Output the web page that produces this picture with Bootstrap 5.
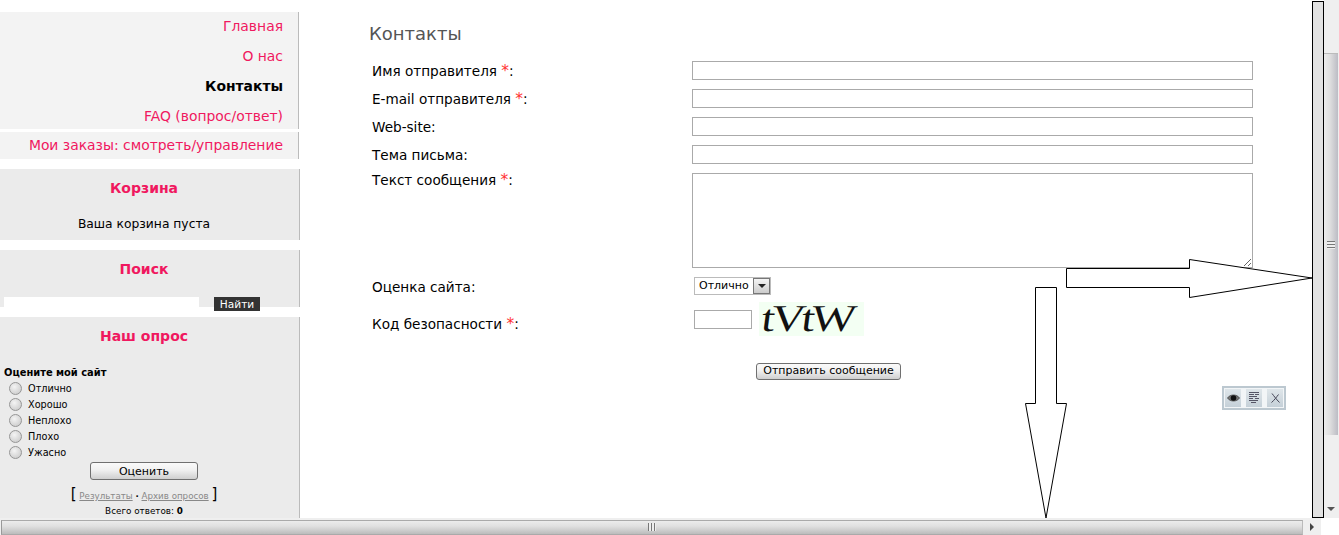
<!DOCTYPE html>
<html lang="ru">
<head>
  <meta charset="UTF-8" />
  <meta name="viewport" content="width=device-width, initial-scale=1.0"/>
  <title>Контакты</title>
  <link href="https://cdn.jsdelivr.net/npm/bootstrap@5.3.0/dist/css/bootstrap.min.css" rel="stylesheet">
  <style>
    html, body { height: 535px; overflow: hidden; background: #fff; }
    body { font-family: "DejaVu Sans", Verdana, sans-serif; font-size: 13.6px; color: #000; line-height: 1.2; }
    a { color: #f0185f; text-decoration: none; }

    .shell { position: relative; height: 535px; width: 1339px; }
    .page-row { height: 518px; }
    .side { width: 300px; padding-top: 12px; }
    .menu-box { background: #f3f3f3; border-right: 1px solid #bbb; width: 299px; padding-right: 15px; text-align: right; font-size: 13.9px; }
    .menu-box a, .menu-box b { display: block; height: 30px; line-height: 29px; }
    .menu-box b { color: #000; }
    .menu-one { height: 117px; margin-bottom: 3px; }
    .menu-two { height: 27px; margin-bottom: 10px; }
    .menu-two a { height: 27px; line-height: 27px; }
    .side-box { background: #ebebeb; border-right: 1px solid #bbb; text-align: center; padding-right: 11px; }
    .side-title { color: #f0185f; font-weight: 700; font-size: 14px; line-height: 18px; }
    .box-cart { height: 71px; padding-top: 10px; margin-bottom: 10px; font-size: 12.3px; }
    .box-cart p { margin: 19px 0 0; line-height: 16px; }
    .box-search { height: 57px; padding-top: 10px; margin-bottom: 10px; }
    .search-row { margin-top: 19px; padding-left: 4px; }
    .search-input { width: 195px; height: 10px; background: #fff; border: 0; padding: 0; margin-right: 15px; }
    .search-btn { width: 46px; height: 14px; margin-bottom: -4px; background: #333; color: #fff; border: 0; border-radius: 0; padding: 0; font-size: 10.6px; line-height: 14px; }
    .box-poll { height: 201px; padding-top: 10px; font-size: 9.7px; }
    .poll-q { text-align: left; font-weight: 700; font-size: 9.9px; padding-left: 4px; margin-top: 21px; line-height: 14px; height: 14px; }
    .poll-opt { height: 16px; padding-left: 9px; line-height: 15px; text-align: left; }
    .poll-opt input { appearance: none; width: 13px; height: 13px; margin: 1px 6px 0 0; flex: none; border: 1px solid #969696; border-radius: 50%; background: radial-gradient(circle at 40% 35%, #f4f4f4, #c4c4c4); }
    .grey-btn { background: linear-gradient(#fafafa, #f0f0f0 45%, #cfcfcf); border: 1px solid #707070; border-radius: 3px; color: #000; padding: 0; }
    .poll-btn { width: 108px; height: 18px; font-size: 11px; line-height: 15px; margin: 2px auto 0; display: block; }
    .poll-links { margin-top: 7px; line-height: 16px; font-size: 8.7px; color: #000; }
    .poll-links a { color: #888; text-decoration: underline; }
    .poll-links span { font-size: 15px; font-weight: 400; line-height: 14px; }
    .poll-total { margin-top: 1px; font-size: 8.8px; line-height: 12px; }

    .main-col { padding-left: 69px; }
    .page-title { font-size: 18px; font-weight: 400; color: #555; margin: 23px 0 0; line-height: 21px; height: 38px; }
    .contact-grid { display: grid; grid-template-columns: 320px 561px; row-gap: 9px; padding-left: 3px; }
    .contact-grid label { line-height: 18px; padding-top: 1px; margin: 0; }
    .contact-grid i { font-style: normal; color: #f33; font-size: 15.5px; line-height: 14px; }
    .contact-grid .label-msg { padding-top: 0; line-height: 15px; }
    .contact-grid .label-code { padding-top: 10px; }
    .plain-input { display: block; box-sizing: border-box; height: 19px; width: 100%; border: 1px solid #aaa; background: #fff; padding: 0; border-radius: 0; }
    .msg-area { height: 95px; }
    .plain-select { box-sizing: border-box; width: 77px; height: 18px; margin-left: 2px; border: 1px solid #bbb; background: #fff; font-size: 11px; line-height: 16px; padding-left: 4px; }
    .plain-select u { width: 17px; height: 16px; border: 1px solid #777; background: linear-gradient(#f4f4f4, #ccc); text-decoration: none; }
    .plain-select u::after { content: ""; border: 4px solid transparent; border-top-color: #222; border-bottom: 0; }
    .captcha-wrap { margin: -3px 0 0 2px; gap: 7px; }
    .captcha-input { width: 58px; }
    .captcha-pic { width: 105px; height: 34px; background: #f3fff3; color: #111; font-family: "Liberation Serif", serif; font-size: 38px; line-height: 33px; letter-spacing: -3px; padding-left: 3px; }
    .captcha-pic span { display: inline-block; transform-origin: 0 50%; transform: scaleX(1.25) skewX(-6deg); }
    .send-row { padding-left: 387px; margin-top: 26px; }
    .send-btn { width: 145px; height: 17px; font-size: 11px; line-height: 14px; }
    .tool-row { width: 917px; margin-top: 6px; }
    .tool-box { width: 64px; height: 24px; border: 2px solid #bcc8d0; background: #f2f5f7; gap: 5px; padding-left: 1px; }
    .tool-box span { width: 16px; height: 18px; background: linear-gradient(#dfe6ea, #c5d0d8); }

    .vbar { width: 27px; margin-left: auto; }
    .vbar-frame { width: 12px; height: 517px; margin-top: 1px; background: #e2e2e2; border: 1px solid #000; }
    .vbar-track { width: 15px; background: #efefef; padding-top: 53px; position: relative; }
    .vbar-thumb { width: 14px; height: 382px; background: linear-gradient(90deg, #ececec, #e0e0e0 40%, #bcbcc4); border-top: 1px solid #bbb; }
    .vbar-grip { width: 8px; height: 8px; background: repeating-linear-gradient(#777 0 1px, #eee 1px 3px); }
    .vbar-down { position: absolute; left: 3px; top: 507px; border: 4px solid transparent; border-top-color: #555; border-bottom: 0; }
    .hbar { height: 17px; background: #efefef; width: 1321px; }
    .hbar-thumb { width: 1302px; height: 15px; margin: 1px 0 0 1px; border: 1px solid #aaa; border-left-color: #999; border-right-color: #bbb; background: linear-gradient(#ececec, #e0e0e0 40%, #bcbcbc); }
    .hbar-grip { width: 8px; height: 8px; background: repeating-linear-gradient(90deg, #777 0 1px, #eee 1px 3px); }
    .hbar-right { margin-left: 7px; border: 4px solid transparent; border-left-color: #444; border-right: 0; }
    .arrows { position: absolute; left: 0; top: 0; pointer-events: none; }
  </style>
</head>
<body>
  <div class="shell">
    <div class="page-row d-flex">
      <div class="side flex-shrink-0">
        <div class="menu-box menu-one">
          <a href="#">Главная</a>
          <a href="#">О нас</a>
          <b>Контакты</b>
          <a href="#">FAQ (вопрос/ответ)</a>
        </div>
        <div class="menu-box menu-two"><a href="#">Мои заказы: смотреть/управление</a></div>

        <div class="side-box box-cart">
          <div class="side-title">Корзина</div>
          <p>Ваша корзина пуста</p>
        </div>

        <div class="side-box box-search">
          <div class="side-title">Поиск</div>
          <div class="search-row d-flex align-items-start">
            <input class="search-input" type="text">
            <button class="btn search-btn">Найти</button>
          </div>
        </div>

        <div class="side-box box-poll">
          <div class="side-title">Наш опрос</div>
          <div class="poll-q">Оцените мой сайт</div>
          <div class="poll-opt d-flex align-items-center"><input type="radio" name="vote">Отлично</div>
          <div class="poll-opt d-flex align-items-center"><input type="radio" name="vote">Хорошо</div>
          <div class="poll-opt d-flex align-items-center"><input type="radio" name="vote">Неплохо</div>
          <div class="poll-opt d-flex align-items-center"><input type="radio" name="vote">Плохо</div>
          <div class="poll-opt d-flex align-items-center"><input type="radio" name="vote">Ужасно</div>
          <button class="btn grey-btn poll-btn">Оценить</button>
          <div class="poll-links"><span>[</span> <a href="#">Результаты</a> <b>·</b> <a href="#">Архив опросов</a> <span>]</span></div>
          <div class="poll-total">Всего ответов: <b>0</b></div>
        </div>
      </div>

      <div class="main-col flex-grow-1">
        <h1 class="page-title">Контакты</h1>
        <form class="contact-grid">
          <label>Имя отправителя <i>*</i>:</label><input class="plain-input" type="text">
          <label>E-mail отправителя <i>*</i>:</label><input class="plain-input" type="text">
          <label>Web-site:</label><input class="plain-input" type="text">
          <label>Тема письма:</label><input class="plain-input" type="text">
          <label class="label-msg">Текст сообщения <i>*</i>:</label><textarea class="plain-input msg-area"></textarea>
          <label>Оценка сайта:</label>
          <div class="plain-select d-flex align-items-center justify-content-between">Отлично<u class="d-flex align-items-center justify-content-center"></u></div>
          <label class="label-code">Код безопасности <i>*</i>:</label>
          <div class="captcha-wrap d-flex align-items-center">
            <input class="plain-input captcha-input" type="text">
            <div class="captcha-pic"><span>tVtW</span></div>
          </div>
        </form>
        <div class="send-row"><button class="btn grey-btn send-btn">Отправить сообщение</button></div>
        <div class="tool-row d-flex justify-content-end">
          <div class="tool-box d-flex align-items-center">
            <span class="d-flex align-items-center justify-content-center">
              <svg width="13" height="10" viewBox="0 0 13 10"><path d="M.5 5C3 1 10 1 12.5 5C10 9 3 9 .5 5Z" fill="#777" stroke="#333" stroke-width=".7"/><circle cx="6.5" cy="5" r="2.8" fill="#111"/></svg>
            </span>
            <span class="d-flex align-items-center justify-content-center">
              <svg width="10" height="11" viewBox="0 0 10 11"><path d="M0 .5H10M0 2.5H5M6 2.5H10M0 4.5H8M0 6.5H4M6 6.5H10M0 8.5H9M2 10.5H7" stroke="#556" fill="none"/></svg>
            </span>
            <span class="d-flex align-items-center justify-content-center">
              <svg width="9" height="10" viewBox="0 0 9 10"><path d="M1 .5C3 3 5 6 8.5 9.5M7.5 1.5C5.5 4 3.5 7 .5 9.5" stroke="#445" fill="none"/></svg>
            </span>
          </div>
        </div>
      </div>

      <div class="vbar d-flex flex-shrink-0">
        <div class="vbar-frame"></div>
        <div class="vbar-track">
          <div class="vbar-thumb d-flex align-items-center justify-content-center"><div class="vbar-grip"></div></div>
          <div class="vbar-down"></div>
        </div>
      </div>
    </div>

    <div class="hbar d-flex align-items-center">
      <div class="hbar-thumb d-flex align-items-center justify-content-center"><div class="hbar-grip"></div></div>
      <div class="hbar-right"></div>
    </div>

    <svg class="arrows" width="1339" height="535" viewBox="0 0 1339 535">
      <path d="M1066.5 268.5H1189.5V259.5L1312 278L1189.5 297.5V287.5H1066.5Z" fill="#fff" stroke="#000"/>
      <path d="M1035.5 287.5H1056.5V403.5H1066.5L1046 518L1025.5 403.5H1035.5Z" fill="#fff" stroke="#000"/>
    </svg>
  </div>
  <script src="https://cdn.jsdelivr.net/npm/bootstrap@5.3.0/dist/js/bootstrap.bundle.min.js"></script>
</body>
</html>
